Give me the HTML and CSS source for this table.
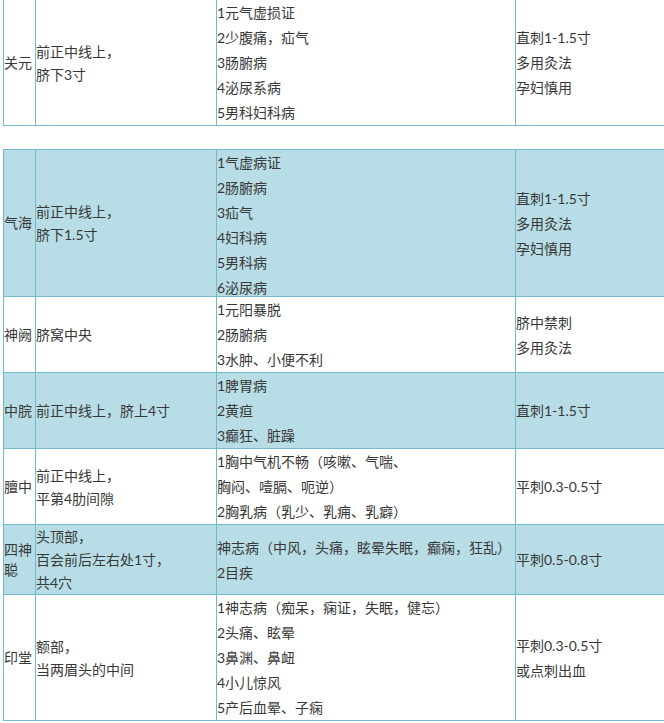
FILE: index.html
```html
<!DOCTYPE html>
<html lang="zh-CN">
<head>
<meta charset="utf-8">
<title>穴位表</title>
<link rel="stylesheet" href="styles.css">
</head>
<body>
<div class="page">
  <table class="acu first">
    <colgroup><col class="c1"><col class="c2"><col class="c3"><col class="c4"></colgroup>
    <tr class="white">
      <td class="name">关元</td>
      <td class="loc">前正中线上，<br>脐下3寸</td>
      <td class="ind">1元气虚损证<br>2少腹痛，疝气<br>3肠腑病<br>4泌尿系病<br>5男科妇科病</td>
      <td class="op">直刺1-1.5寸<br>多用灸法<br>孕妇慎用</td>
    </tr>
  </table>

  <table class="acu second">
    <colgroup><col class="c1"><col class="c2"><col class="c3"><col class="c4"></colgroup>
    <tr class="blue">
      <td class="name">气海</td>
      <td class="loc">前正中线上，<br>脐下1.5寸</td>
      <td class="ind"><div class="tight">1气虚病证<br>2肠腑病<br>3疝气<br>4妇科病<br>5男科病<br>6泌尿病</div></td>
      <td class="op">直刺1-1.5寸<br>多用灸法<br>孕妇慎用</td>
    </tr>
    <tr class="white">
      <td class="name">神阙</td>
      <td class="loc">脐窝中央</td>
      <td class="ind">1元阳暴脱<br>2肠腑病<br>3水肿、小便不利</td>
      <td class="op">脐中禁刺<br>多用灸法</td>
    </tr>
    <tr class="blue">
      <td class="name">中脘</td>
      <td class="loc">前正中线上，脐上4寸</td>
      <td class="ind">1脾胃病<br>2黄疸<br>3癫狂、脏躁</td>
      <td class="op">直刺1-1.5寸</td>
    </tr>
    <tr class="white">
      <td class="name">膻中</td>
      <td class="loc">前正中线上，<br>平第4肋间隙</td>
      <td class="ind">1胸中气机不畅（咳嗽、气喘、<br>胸闷、噎膈、呃逆）<br>2胸乳病（乳少、乳痈、乳癖）</td>
      <td class="op">平刺0.3-0.5寸</td>
    </tr>
    <tr class="blue">
      <td class="name">四神聪</td>
      <td class="loc">头顶部，<br>百会前后左右处1寸，<br>共4穴</td>
      <td class="ind">神志病（中风，头痛，眩晕失眠，癫痫，狂乱）<br>2目疾</td>
      <td class="op">平刺0.5-0.8寸</td>
    </tr>
    <tr class="white">
      <td class="name">印堂</td>
      <td class="loc">额部，<br>当两眉头的中间</td>
      <td class="ind">1神志病（痴呆，痫证，失眠，健忘）<br>2头痛、眩晕<br>3鼻渊、鼻衄<br>4小儿惊风<br>5产后血晕、子痫</td>
      <td class="op">平刺0.3-0.5寸<br>或点刺出血</td>
    </tr>
  </table>
</div>
</body>
</html>
```

FILE: styles.css
```css
html, body {
  margin: 0;
  padding: 0;
  background: #ffffff;
  overflow: hidden;
}

.page {
  width: 664px;
  height: 723px;
  overflow: hidden;
  padding-left: 3px;
  box-sizing: border-box;
}

.acu {
  border-collapse: collapse;
  table-layout: fixed;
  width: 740px;
  font-family: "Lato", "Noto Sans CJK SC", sans-serif;
  font-size: 14px;
  color: #383838;
}

.acu.first {
  margin-top: -1px;
}

.acu.second {
  margin-top: 23px;
}

.c1 { width: 32px; }
.c2 { width: 181px; }
.c3 { width: 299px; }
.c4 { width: 228px; }

.acu td {
  border: 1px solid #74b9d0;
  padding: 0;
  vertical-align: middle;
  line-height: 25px;
  overflow: hidden;
}

.acu td.name {
  line-height: 20px;
}

.acu td.loc {
  line-height: 23px;
}

.white td {
  background: #ffffff;
}

.blue td {
  background: #b8dde6;
}

.tight {
  margin-bottom: -4px;
}
```
